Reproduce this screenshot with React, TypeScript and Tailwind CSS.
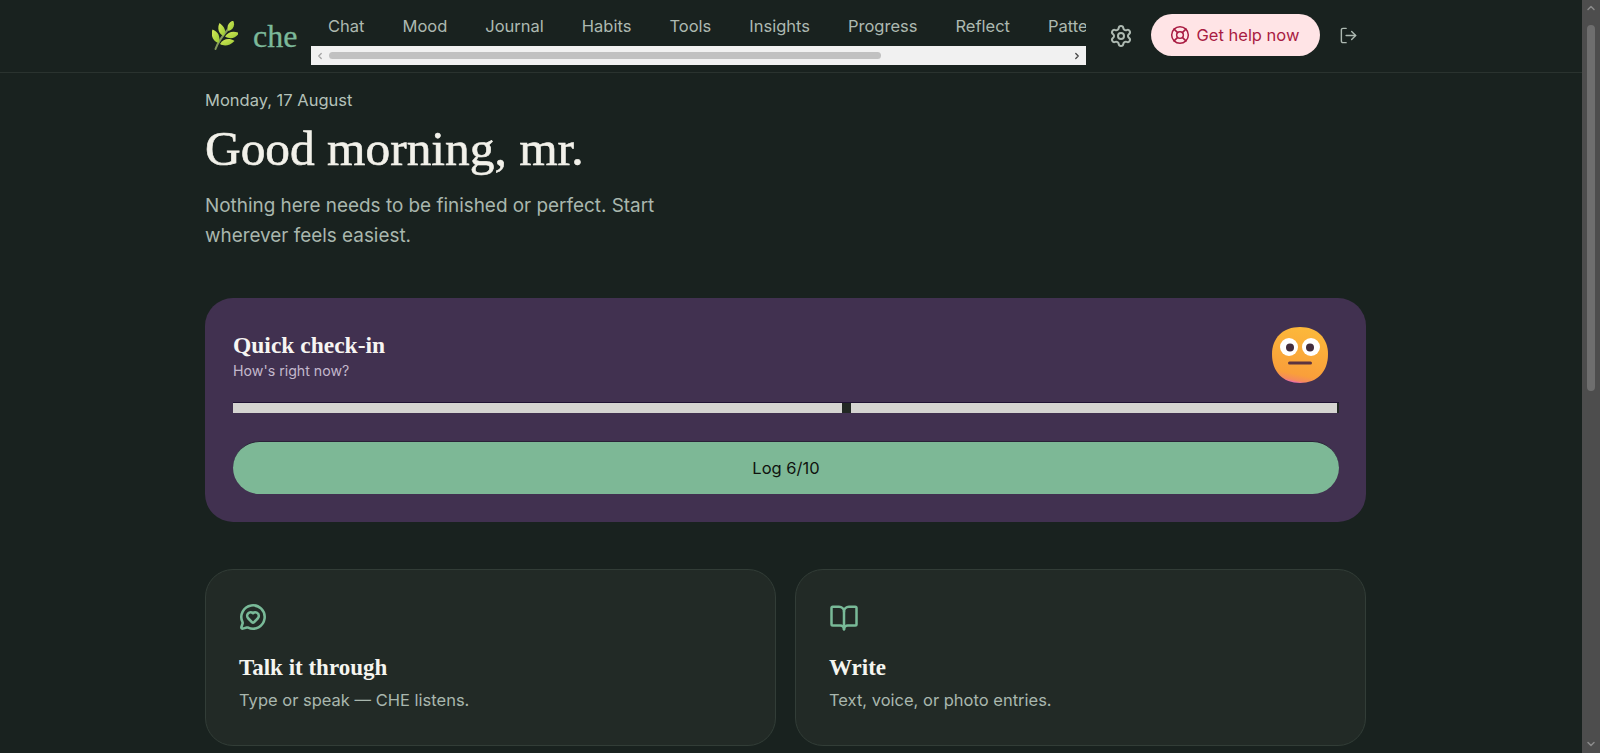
import { BookOpen, ChevronDown, ChevronLeft, ChevronRight, ChevronUp, LifeBuoy, LogOut, MessageCircleHeart, Settings } from "lucide-react";

const navItems = ["Chat", "Mood", "Journal", "Habits", "Tools", "Insights", "Progress", "Reflect", "Patterns"];

function LeafLogo() {
  return (
    <svg width="26" height="29" viewBox="0 0 26 29" fill="none">
      <defs>
        <linearGradient id="leaf" x1="0" y1="0" x2="1" y2="1">
          <stop offset="0" stopColor="#d6ea5a" />
          <stop offset="1" stopColor="#97c832" />
        </linearGradient>
      </defs>
      <path d="M3.500 28C6 21 11 14 18 6" stroke="#84985c" strokeWidth="2" strokeLinecap="round" />
      <path d="M6.500 22C.5 20.500 -1.500 14 .5 8.500 6 10.500 9 16 6.500 22Z" fill="url(#leaf)" />
      <path d="M11.500 15C6.500 13 5 7 7.500 2 12.500 5.500 15 10.500 11.500 15Z" fill="url(#leaf)" />
      <path d="M16.500 10C14 5.500 16.500 1.500 21 -.5 23.500 3.500 21.500 8.500 16.500 10Z" fill="url(#leaf)" />
      <path d="M8 23C11 18 17 16.500 22.500 20 17.500 25 12 25.500 8 23Z" fill="url(#leaf)" />
      <path d="M13 15.500C16 10.500 22 9.500 27 12 24 17.500 18 18.500 13 15.500Z" fill="url(#leaf)" />
    </svg>
  );
}

function FaceEmoji() {
  return (
    <svg width="56" height="56" viewBox="0 0 56 56">
      <defs>
        <linearGradient id="face" x1="0.65" y1="0" x2="0.45" y2="1">
          <stop offset="0" stopColor="#fcb93a" />
          <stop offset="0.85" stopColor="#f99f3a" />
          <stop offset="0.96" stopColor="#f58a5c" />
          <stop offset="1" stopColor="#ee6bb0" />
        </linearGradient>
      </defs>
      <path d="M28 0C45 0 56 11 56 27 56 45 45 56 28 56 11 56 0 45 0 27 0 11 11 0 28 0Z" fill="url(#face)" />
      <circle cx="17" cy="20" r="9" fill="#fff" />
      <circle cx="39" cy="20" r="9" fill="#fff" />
      <circle cx="18" cy="20.500" r="4" fill="#432d3f" />
      <circle cx="38" cy="20.500" r="4" fill="#432d3f" />
      <rect x="16" y="34.500" width="24" height="3" rx="1.500" fill="#5b3340" />
    </svg>
  );
}

function ActionCard({ icon, title, text }: { icon: React.ReactNode; title: string; text: string }) {
  return (
    <div className="h-[177px] rounded-[28px] border border-[#323d37] bg-[#222a26] px-[33px] pt-[33px]">
      <div className="h-[30px] text-[#79ba98]">{icon}</div>
      <h3 className="mt-[20px] font-['Liberation_Serif',serif] text-[23px] leading-[30px] font-bold text-[#f5f5f0]">{title}</h3>
      <p className="mt-[5px] text-[16.5px] leading-6 text-[#a9b7ae]">{text}</p>
    </div>
  );
}

export default function App() {
  return (
    <div className="flex h-screen overflow-hidden bg-[#19221f] font-['Inter',sans-serif]">
      <div className="min-w-0 flex-1">
        {/* Header */}
        <header className="flex h-[73px] items-center border-b border-[#2a332f] pb-[1px] pl-[212px]">
          <LeafLogo />
          <span className="mt-[1px] ml-[15px] w-[58px] font-['Liberation_Serif',serif] text-[32px] leading-none text-[#7cb99a] [-webkit-text-stroke:0.3px_#7cb99a]">che</span>
          <nav className="w-[775px] self-start">
            <div className="flex h-[46px] gap-[6px] overflow-hidden pt-[14px] pl-[1px]">
              {navItems.map((item) => (
                <span key={item} className="shrink-0 px-4 text-[16.5px] leading-6 text-[#adb9b1]">{item}</span>
              ))}
            </div>
            <div className="flex h-[19px] items-center bg-[#f1f1f1] text-[#6e6e6e]">
              <ChevronLeft size={10} strokeWidth={3} className="ml-[4px] text-[#a3a3a3]" />
              <div className="ml-[4px] h-[7px] w-[552px] rounded-full bg-[#c1c1c1]" />
              <ChevronRight size={10} strokeWidth={3} className="mr-[4px] ml-auto text-[#444]" />
            </div>
          </nav>
          <Settings size={24} strokeWidth={2} className="ml-[23px] text-[#adb9b1]" />
          <button className="-mt-[1px] ml-[18px] flex h-[42px] w-[169px] items-center justify-center gap-[7px] rounded-full bg-[#ffe4e6] pr-[2px] text-[16.5px] text-[#a91b42]">
            <LifeBuoy size={20} strokeWidth={1.8} />
            Get help now
          </button>
          <LogOut size={19} strokeWidth={1.8} className="-mt-[1px] ml-[19px] text-[#adb9b1]" />
        </header>

        <main className="w-[1366px] pt-[15px] pl-[205px]">
          <p className="text-[16.5px] leading-6 text-[#b4c1b9]">Monday, 17 August</p>
          <h1 className="mt-[9px] font-['Liberation_Serif',serif] text-[49.4px] leading-[56px] text-[#f2f1ea] [-webkit-text-stroke:0.6px_#f2f1ea]">Good morning, mr.</h1>
          <p className="mt-[14px] max-w-[480px] text-[18.9px] leading-[30px] text-[#a9b7ae]">
            Nothing here needs to be finished or perfect. Start wherever feels easiest.
          </p>

          {/* Quick check-in */}
          <section className="mt-[47px] h-[224px] rounded-[28px] bg-[#413150] pt-[29px] pr-[27px] pl-[28px]">
            <div className="flex h-[56px] justify-between pr-[11px]">
              <div className="pt-[3px]">
                <h2 className="font-['Liberation_Serif',serif] text-[23.5px] leading-[30px] font-bold text-[#f7f5f2]">Quick check-in</h2>
                <p className="mt-[1px] text-[14.2px] leading-5 text-[#c3b8cc]">How's right now?</p>
              </div>
              <FaceEmoji />
            </div>
            <div className="mt-[19px] flex h-[11px] border-t border-[#1f1233] bg-[#d5d4d1]">
              <div className="ml-[609px] w-[9px] bg-[#222824]" />
              <div className="flex-1" />
              <div className="w-[2px] bg-[#222824]" />
            </div>
            <button className="mt-[28px] h-[53px] w-full rounded-full border-t border-[#2a2238] bg-[#7db896] text-[16.5px] text-[#10130f]">
              Log 6/10
            </button>
          </section>

          <div className="mt-[47px] grid grid-cols-2 gap-[19px]">
            <ActionCard icon={<MessageCircleHeart size={28} strokeWidth={2.200} />} title="Talk it through" text="Type or speak — CHE listens." />
            <ActionCard icon={<BookOpen size={30} strokeWidth={2} />} title="Write" text="Text, voice, or photo entries." />
          </div>
        </main>
      </div>

      {/* Page scrollbar */}
      <div className="flex w-[18px] shrink-0 flex-col items-center bg-[#4d4d4d] text-[#8a8a8a]">
        <ChevronUp size={12} strokeWidth={3} className="mt-[2px]" />
        <div className="mt-[11px] h-[366px] w-[8px] rounded-full bg-[#6e6e6e]" />
        <ChevronDown size={12} strokeWidth={3} className="mt-auto mb-[3px]" />
      </div>
    </div>
  );
}
